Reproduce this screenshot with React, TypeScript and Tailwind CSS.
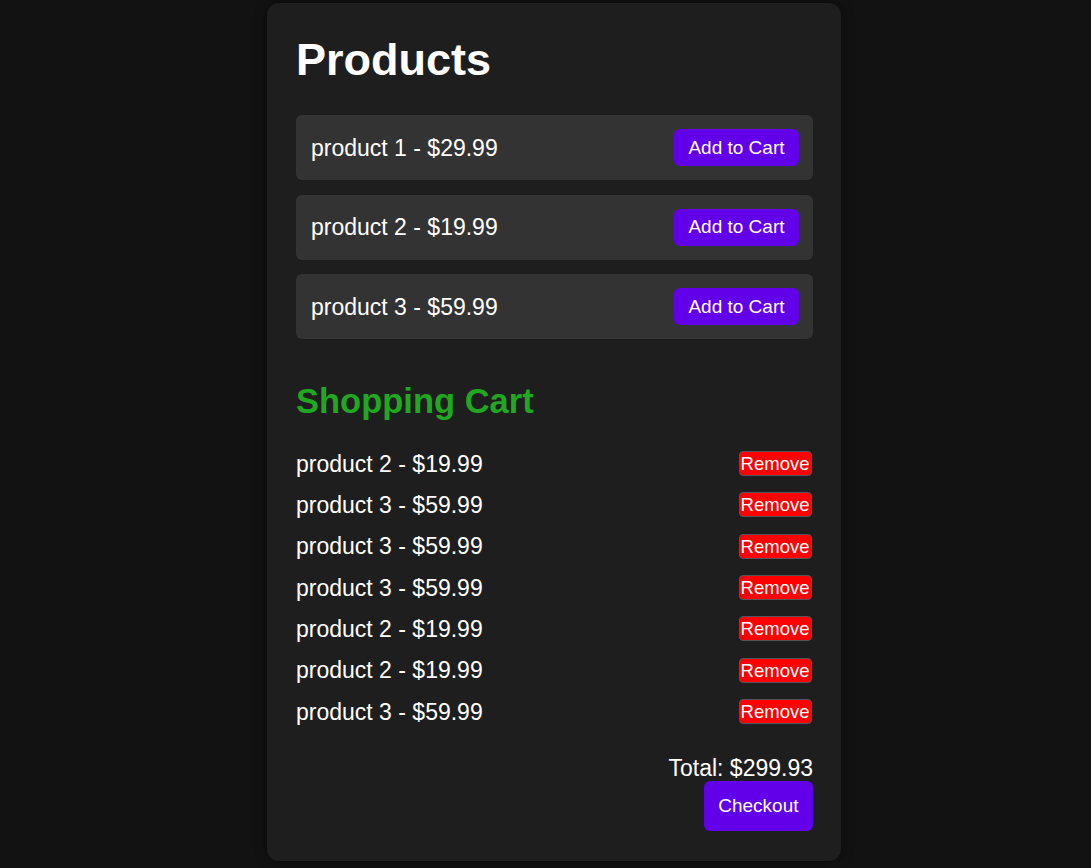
import React, { useState } from "react";

type Product = { id: number; name: string; price: number };

const products: Product[] = [
  { id: 1, name: "product 1", price: 29.99 },
  { id: 2, name: "product 2", price: 19.99 },
  { id: 3, name: "product 3", price: 59.99 },
];

const initialCart = [2, 3, 3, 3, 2, 2, 3];

const App = () => {
  const [cart, setCart] = useState<number[]>(initialCart);

  const items = cart.map((id) => products.find((p) => p.id === id)!);
  const total = items.reduce((sum, p) => sum + p.price, 0);

  return (
    <div className="min-h-[868px] bg-[#121212] pt-[3px] pb-[8px] font-['Liberation_Sans',Arial,sans-serif] text-white">
      <div className="ml-[267px] w-[574px] rounded-[12px] bg-[#1e1e1e] pl-[29px] pr-[28px] pt-[31px] pb-[30px] shadow-[0_0_12px_rgba(0,0,0,0.55)]">
        <h1 className="text-[45px] font-bold leading-[52px]">Products</h1>

        {/* product list */}
        <div className="mt-[29px] flex flex-col gap-[14.5px]">
          {products.map((p) => (
            <div
              key={p.id}
              className="flex h-[65px] items-center justify-between rounded-[6px] bg-[#333333] pl-[15px] pr-[14px]"
            >
              <span className="text-[23px] leading-[26px]">
                {p.name} - ${p.price.toFixed(2)}
              </span>
              <button
                onClick={() => setCart([...cart, p.id])}
                className="h-[37px] rounded-[6px] bg-[#6200ea] px-[14.5px] text-[19px] leading-[22px] text-white"
              >
                Add to Cart
              </button>
            </div>
          ))}
        </div>

        <h2 className="mt-[43px] text-[34.5px] font-bold leading-[39px] text-[#22a722]">Shopping Cart</h2>

        {/* cart items */}
        <div className="mt-[22px] flex flex-col">
          {items.map((p, i) => (
            <div key={i} className="flex h-[41.33px] items-center justify-between">
              <span className="text-[23px] leading-[26px]">
                {p.name} - ${p.price.toFixed(2)}
              </span>
              <button
                onClick={() => setCart(cart.filter((_, j) => j !== i))}
                className="mr-[1.5px] rounded-[4px] border border-[#555555] bg-[#ff0000] px-px py-px text-[18.5px] leading-[21px] text-white"
              >
                Remove
              </button>
            </div>
          ))}
        </div>

        <div className="mt-[23px] flex flex-col items-end">
          <span className="text-[23px] leading-[26px]">Total: ${total.toFixed(2)}</span>
          <button className="h-[50px] rounded-[6px] bg-[#6200ea] px-[14.5px] text-[19px] leading-[22px] text-white">
            Checkout
          </button>
        </div>
      </div>
    </div>
  );
};

export default App;
